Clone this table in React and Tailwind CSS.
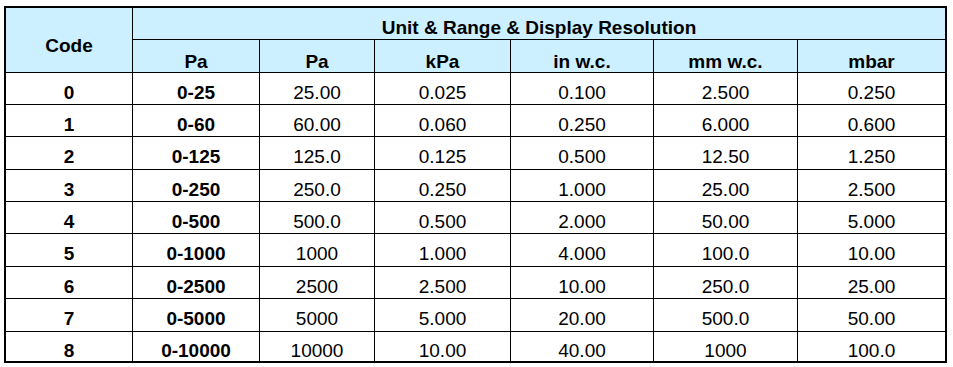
import React from "react";

const rows = [
  ["0", "0-25", "25.00", "0.025", "0.100", "2.500", "0.250"],
  ["1", "0-60", "60.00", "0.060", "0.250", "6.000", "0.600"],
  ["2", "0-125", "125.0", "0.125", "0.500", "12.50", "1.250"],
  ["3", "0-250", "250.0", "0.250", "1.000", "25.00", "2.500"],
  ["4", "0-500", "500.0", "0.500", "2.000", "50.00", "5.000"],
  ["5", "0-1000", "1000", "1.000", "4.000", "100.0", "10.00"],
  ["6", "0-2500", "2500", "2.500", "10.00", "250.0", "25.00"],
  ["7", "0-5000", "5000", "5.000", "20.00", "500.0", "50.00"],
  ["8", "0-10000", "10000", "10.00", "40.00", "1000", "100.0"],
];

const units = ["Pa", "Pa", "kPa", "in w.c.", "mm w.c.", "mbar"];

export default function App() {
  return (
    <div className="bg-white w-[953px] h-[367px] pt-[6px] pl-[4px]" style={{ fontFamily: '"Liberation Sans", Arial, sans-serif' }}>
      <div className="grid w-[943px] border-2 border-black bg-black gap-px text-black text-[19px] leading-[21px] grid-cols-[126px_126px_114px_135px_142px_143px_147px] grid-rows-[31px_32px_31px_31px_32px_31px_31px_32px_31px_32px_29px]">
        <div className="row-span-2 bg-[#ccf0ff] flex items-center justify-center font-bold pt-[11px]">Code</div>
        <div className="col-span-6 bg-[#ccf0ff] flex items-center justify-center font-bold pt-[8px]">Unit &amp; Range &amp; Display Resolution</div>
        {units.map((u, i) => (
          <div key={i} className="bg-[#ccf0ff] flex items-center justify-center font-bold pt-[10px]">{u}</div>
        ))}
        {rows.map((r, ri) =>
          r.map((c, ci) => (
            <div
              key={ri + "-" + ci}
              className={ci < 2 ? "bg-white flex items-center justify-center font-bold pt-[7px]" : "bg-white flex items-center justify-center pt-[7px]"}
            >
              {c}
            </div>
          ))
        )}
      </div>
    </div>
  );
}
